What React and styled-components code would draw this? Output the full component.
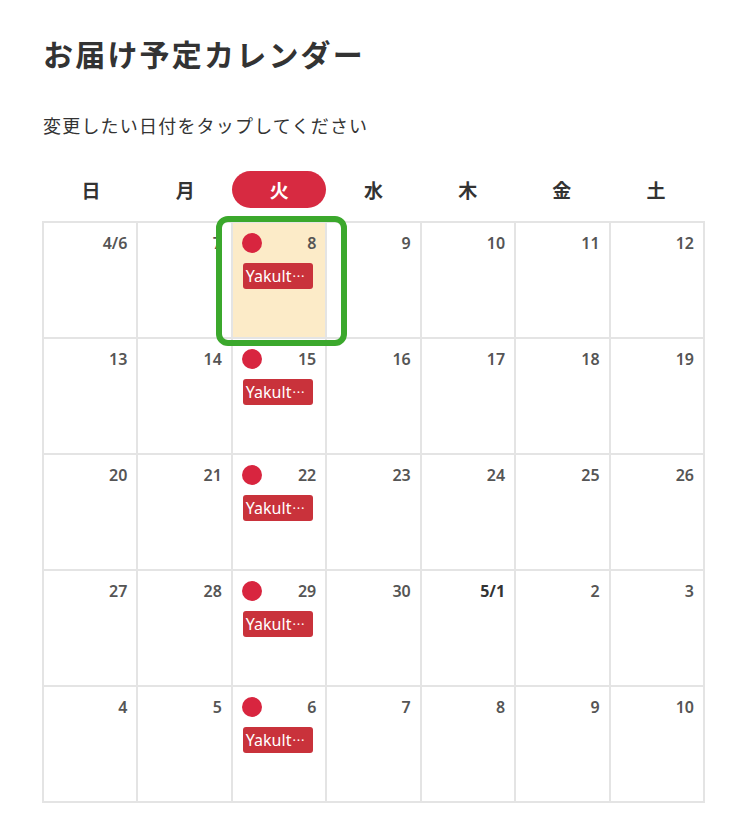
import React from 'react';
import styled, { createGlobalStyle } from 'styled-components';

const GlobalStyle = createGlobalStyle`
  body {
    margin: 0;
    background: #fff;
    font-family: "Noto Sans CJK JP", "Noto Sans", sans-serif;
    color: #333;
  }
`;

const Page = styled.div`
  width: 750px;
  padding: 33px 0 0 43px;
  box-sizing: border-box;
`;

const Title = styled.h1`
  margin: 0;
  font-size: 30px;
  line-height: 40px;
  font-weight: 700;
  color: #333;
  letter-spacing: 2.2px;
`;

const Lead = styled.p`
  margin: 40px 0 0;
  font-size: 18px;
  line-height: 24px;
  color: #333;
  letter-spacing: 1.2px;
`;

const Calendar = styled.div`
  width: 663px;
  margin-left: -1px;
`;

const WeekRow = styled.div`
  display: grid;
  grid-template-columns: repeat(7, 1fr);
  margin-top: 34px;
  padding: 0 2px;
  height: 37px;
`;

const WeekDay = styled.div`
  display: flex;
  align-items: center;
  justify-content: center;
  font-size: 19px;
  font-weight: 700;
  color: ${p => (p.$active ? '#fff' : '#333')};
  background: ${p => (p.$active ? '#d72a41' : 'transparent')};
  border-radius: 19px;
`;

const Grid = styled.div`
  display: grid;
  grid-template-columns: repeat(7, 1fr);
  grid-auto-rows: 114px;
  gap: 2px;
  padding: 2px;
  margin-top: 13px;
  background: #e4e4e4;
`;

const Cell = styled.div`
  position: relative;
  background: ${p => (p.$selected ? '#fcebc8' : '#fff')};
  padding: 10px 9px 0;
  display: flex;
  flex-direction: column;
  align-items: flex-start;
`;

const Head = styled.div`
  display: flex;
  align-items: center;
  justify-content: space-between;
  width: 100%;
  height: 20px;
`;

const Dot = styled.span`
  width: 20px;
  height: 20px;
  border-radius: 50%;
  background: #d8253f;
`;

const DayNum = styled.span`
  margin-left: auto;
  font-family: "Noto Sans", sans-serif;
  font-size: 16px;
  line-height: 20px;
  font-weight: ${p => (p.$bold ? 700 : 600)};
  color: ${p => (p.$bold ? '#333' : '#555')};
`;

const Badge = styled.span`
  margin-top: 10px;
  margin-left: 1px;
  width: 70px;
  height: 26px;
  box-sizing: border-box;
  padding: 0 3px;
  display: flex;
  align-items: center;
  background: #c9323b;
  color: #fff;
  font-family: "Noto Sans", sans-serif;
  font-size: 16px;
  border-radius: 3px;
  white-space: nowrap;
  overflow: hidden;
`;

const Dots = styled.span`
  font-size: 13px;
  letter-spacing: 0.8px;
  margin-left: 1px;
`;

const Highlight = styled.div`
  position: absolute;
  left: -17px;
  right: -22px;
  top: -7px;
  bottom: -9px;
  border: 6px solid #3ba82c;
  border-radius: 12px;
  pointer-events: none;
  z-index: 2;
`;

const weekDays = ['日', '月', '火', '水', '木', '金', '土'];

const days = [
  '4/6', '7', '8', '9', '10', '11', '12',
  '13', '14', '15', '16', '17', '18', '19',
  '20', '21', '22', '23', '24', '25', '26',
  '27', '28', '29', '30', '5/1', '2', '3',
  '4', '5', '6', '7', '8', '9', '10',
];

export default function App() {
  return (
    <Page>
      <GlobalStyle />
      <Title>お届け予定カレンダー</Title>
      <Lead>変更したい日付をタップしてください</Lead>
      <Calendar>
        <WeekRow>
          {weekDays.map((d, i) => (
            <WeekDay key={d} $active={i === 2}>{d}</WeekDay>
          ))}
        </WeekRow>
        <Grid>
          {days.map((d, i) => {
            const delivery = i % 7 === 2;
            const selected = i === 2;
            return (
              <Cell key={i} $selected={selected}>
                <Head>
                  {delivery && <Dot />}
                  <DayNum $bold={d === '5/1'}>{d}</DayNum>
                </Head>
                {delivery && <Badge>Yakult<Dots>···</Dots></Badge>}
                {selected && <Highlight />}
              </Cell>
            );
          })}
        </Grid>
      </Calendar>
    </Page>
  );
}
